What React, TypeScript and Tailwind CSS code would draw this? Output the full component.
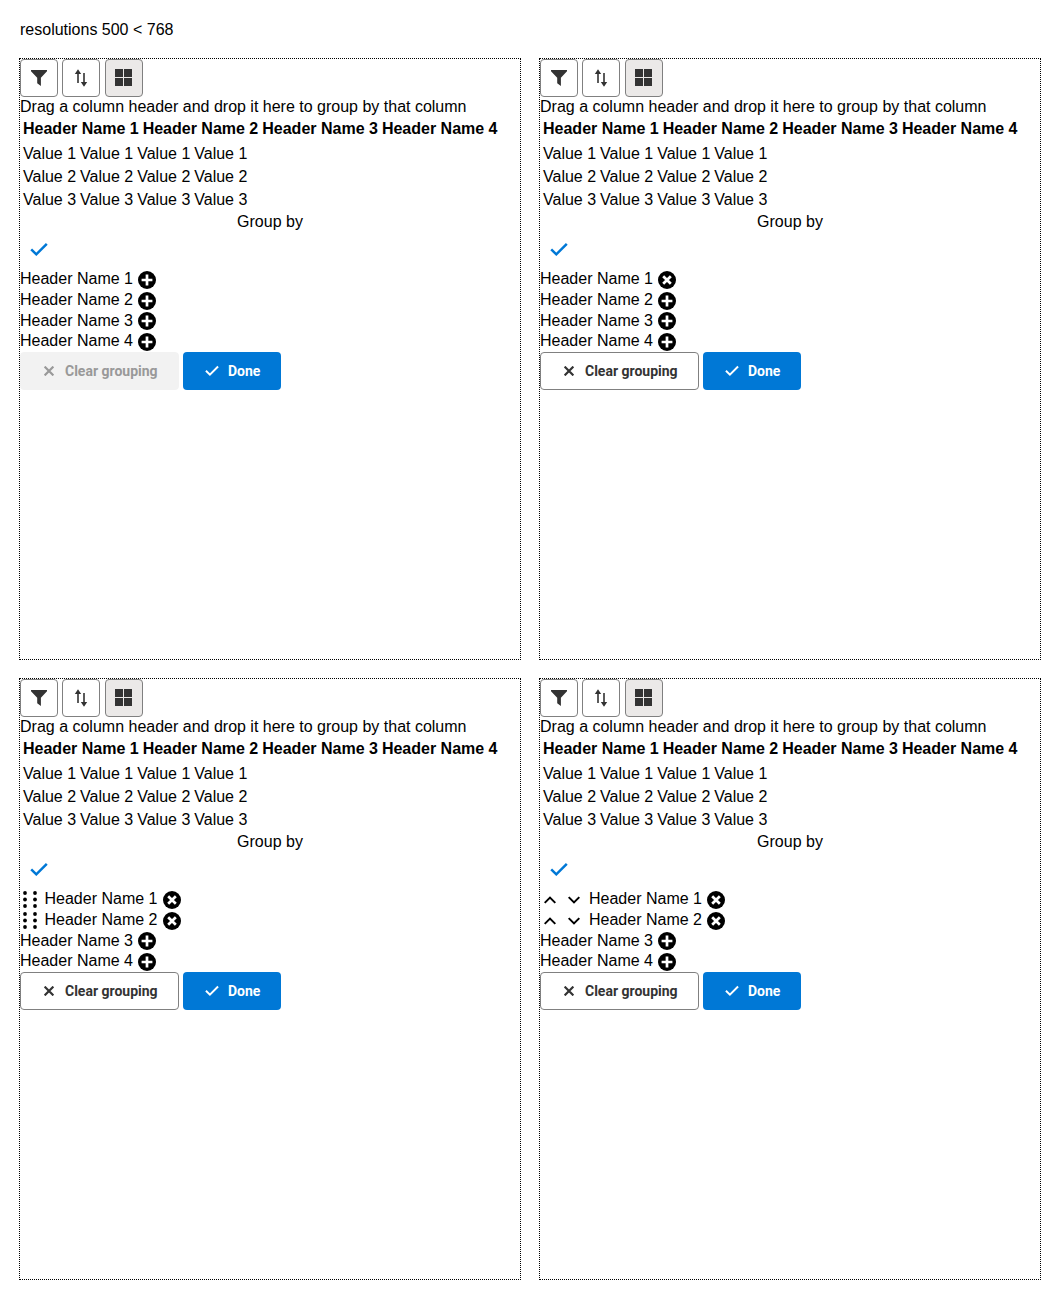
import React from "react";

type Mode = "plus" | "cross" | "drag" | "arrows";

const NUMBERS = [1, 2, 3, 4];

function FilterIcon() {
  return (
    <svg width="16" height="16" viewBox="0 0 16 16" fill="#333">
      <path d="M0 0h16v1.3L9.9 7.8V16L6.2 13.2V7.8L0 1.3z" />
    </svg>
  );
}

function SortIcon() {
  return (
    <svg width="14" height="18" viewBox="0 0 14 18" fill="#333">
      <path d="M4 0.2 7.2 5H4.8v9H3.2V5H0.8zM10 17.8 6.8 13h2.4V4h1.6v9h2.4z" />
    </svg>
  );
}

function TilesIcon() {
  return (
    <svg className="-mt-px" width="17" height="17" viewBox="0 0 17 17" fill="#333">
      <path d="M0 0h8v8H0zM9 0h8v8H9zM0 9h8v8H0zM9 9h8v8H9z" />
    </svg>
  );
}

function CheckIcon({ className = "" }: { className?: string }) {
  return (
    <svg className={className} viewBox="0 0 18 14" fill="none" stroke="currentColor" strokeWidth="2.5">
      <path d="m1.2 7.3 5.1 5L16.8 1.8" />
    </svg>
  );
}

function CloseIcon() {
  return (
    <svg width="10" height="10" viewBox="0 0 10 10" fill="none" stroke="currentColor" strokeWidth="2.2">
      <path d="m0.6 0.6 8.8 8.8M9.4 0.6 0.6 9.4" />
    </svg>
  );
}

function CircleIcon({ cross }: { cross: boolean }) {
  return (
    <svg width="18" height="18" viewBox="0 0 18 18">
      <circle cx="9" cy="9" r="9" />
      <path
        d="M9 3.6v10.8M3.6 9h10.8"
        stroke="#fff"
        strokeWidth="2.7"
        transform={cross ? "rotate(45 9 9)" : undefined}
      />
    </svg>
  );
}

function DragIcon() {
  return (
    <svg className="ml-[3px] mr-[7.5px] mt-px" width="14" height="17" viewBox="0 0 14 17">
      {[2, 12].map((x) => [2, 8.5, 15].map((y) => <circle key={`${x}-${y}`} cx={x} cy={y} r="1.9" />))}
    </svg>
  );
}

function ArrowIcons() {
  return (
    <svg className="ml-1 mr-2 mt-px" width="37" height="8" viewBox="0 0 37 8" fill="none" stroke="#000" strokeWidth="2">
      <path d="M0.7 6.9 6 1.6l5.3 5.3M24.7 1.1 30 6.4l5.3-5.3" />
    </svg>
  );
}

function ToolButton({ active, children }: { active?: boolean; children: React.ReactNode }) {
  return (
    <button
      className={`flex h-[38px] w-[38px] items-center justify-center rounded-[4px] border border-[#808080] ${
        active ? "bg-[#ebe9e8]" : "bg-white"
      }`}
    >
      {children}
    </button>
  );
}

function Panel({ modes }: { modes: Mode[] }) {
  const disabled = modes.every((m) => m === "plus");
  return (
    <section className="h-[602px] w-[502px] border border-dotted border-black">
      <div className="flex gap-[4.45px]">
        <ToolButton><FilterIcon /></ToolButton>
        <ToolButton><SortIcon /></ToolButton>
        <ToolButton active><TilesIcon /></ToolButton>
      </div>
      <div className="h-[18px] whitespace-nowrap leading-[20px]">
        Drag a column header and drop it here to group by that column
      </div>
      <div className="flex h-[27px] gap-1 whitespace-nowrap pl-[3px] pt-1 font-bold leading-[20px]">
        {NUMBERS.map((n) => <span key={n}>Header Name {n}</span>)}
      </div>
      <div className="h-[70px] pl-[3px] pt-[2px]">
        {[1, 2, 3].map((n) => (
          <div key={n} className="flex h-[23px] gap-1 leading-[20px]">
            {NUMBERS.map((c) => <span key={c}>Value {n}</span>)}
          </div>
        ))}
      </div>
      <div className="h-[18px] text-center leading-[20px]">Group by</div>
      <div className="h-[38px] pl-[10px] pt-3">
        <CheckIcon className="h-[14px] w-[18px] text-[#0078d6]" />
      </div>
      <div className="pt-[1px]">
        {modes.map((mode, i) => (
          <div key={i} className="flex h-[20.8px] items-center">
            {mode === "drag" && <DragIcon />}
            {mode === "arrows" && <ArrowIcons />}
            <span className="-mt-[0.6px] leading-[18px]">Header Name {i + 1}</span>
            <span className={mode === "drag" ? "ml-[5.6px] mt-px" : "ml-[5px] mt-px"}>
              <CircleIcon cross={mode !== "plus"} />
            </span>
          </div>
        ))}
      </div>
      <div className="flex gap-1 font-['Roboto',sans-serif] text-sm font-bold leading-[19px]">
        <button
          disabled={disabled}
          className={`flex h-[38px] w-[159px] items-center rounded-[4px] border pl-[23px] ${
            disabled ? "border-[#f2f2f2] bg-[#f2f2f2] text-[#999]" : "border-[#808080] bg-white text-[#333]"
          }`}
        >
          <CloseIcon />
          <span className="ml-[11px]">Clear grouping</span>
        </button>
        <button className="flex h-[38px] w-[98px] items-center rounded-[4px] bg-[#0078d6] pl-[22px] text-white">
          <CheckIcon className="-mt-px h-[11px] w-[14px]" />
          <span className="ml-[9px]">Done</span>
        </button>
      </div>
    </section>
  );
}

export default function App() {
  return (
    <main className="h-[1299px] w-[1060px] bg-white pl-[19px] pt-5 font-['Liberation_Sans',Arial,sans-serif] text-base text-black">
      <div className="mb-5 h-[18px] pl-px leading-[20px]">resolutions 500 &lt; 768</div>
      <div className="grid grid-cols-[502px_502px] gap-[18px]">
        <Panel modes={["plus", "plus", "plus", "plus"]} />
        <Panel modes={["cross", "plus", "plus", "plus"]} />
        <Panel modes={["drag", "drag", "plus", "plus"]} />
        <Panel modes={["arrows", "arrows", "plus", "plus"]} />
      </div>
    </main>
  );
}
